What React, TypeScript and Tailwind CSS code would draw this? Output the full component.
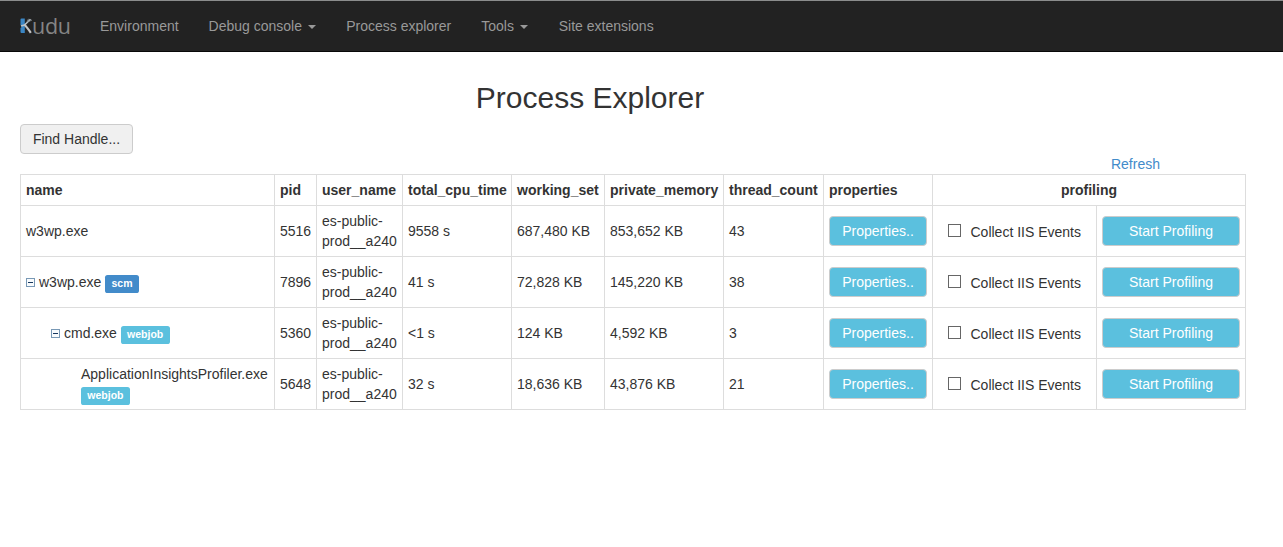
import React from "react";

type Tag = "scm" | "webjob";

interface ProcessRow {
  name: string;
  tag?: Tag;
  depth: 0 | 1 | 2;
  expandable: boolean;
  pid: number;
  cpu: string;
  workingSet: string;
  privateMemory: string;
  threads: number;
}

const rows: ProcessRow[] = [
  { name: "w3wp.exe", depth: 0, expandable: false, pid: 5516, cpu: "9558 s", workingSet: "687,480 KB", privateMemory: "853,652 KB", threads: 43 },
  { name: "w3wp.exe", tag: "scm", depth: 0, expandable: true, pid: 7896, cpu: "41 s", workingSet: "72,828 KB", privateMemory: "145,220 KB", threads: 38 },
  { name: "cmd.exe", tag: "webjob", depth: 1, expandable: true, pid: 5360, cpu: "<1 s", workingSet: "124 KB", privateMemory: "4,592 KB", threads: 3 },
  { name: "ApplicationInsightsProfiler.exe", tag: "webjob", depth: 2, expandable: false, pid: 5648, cpu: "32 s", workingSet: "18,636 KB", privateMemory: "43,876 KB", threads: 21 },
];

const indents = { 0: "pl-[5px]", 1: "pl-[30px]", 2: "pl-[60px]" };
const tagColors = { scm: "bg-[#428bca]", webjob: "bg-[#5bc0de]" };

function KuduLogo() {
  return (
    <a className="flex w-[50px] items-center pb-px text-[#858585]">
      <svg width="13" height="16" viewBox="0 0 13 16" className="shrink-0">
        <path d="M1.5 0.5H4.8V15H1.5Q0.5 15 0.5 14V10L2 8.5L0.5 7V1.5Q0.5 .5 1.5 .5Z" fill="#3b86c4" />
        <path d="M1 8L4.5 7L10.5 1.2" stroke="#b9c4cb" strokeWidth="1.5" fill="none" />
        <path d="M6.8 4.5L8.5 .8M8.3 3.7L12 2" stroke="#858b90" strokeWidth=".9" fill="none" />
        <path d="M4.2 6.5Q7 9 10.8 14.8" stroke="#c4c4c4" strokeWidth="2.2" fill="none" />
      </svg>
      <span className="-ml-px font-['Open_Sans',sans-serif] text-[21.5px] leading-[20px] font-normal tracking-[-0.3px]">udu</span>
    </a>
  );
}

function Caret() {
  return <span className="ml-[6.2px] inline-block border-x-4 border-t-4 border-x-transparent border-t-[#999] align-middle" />;
}

function Collapse() {
  return (
    <svg width="9" height="9" viewBox="0 0 9 9" className="mr-1 inline-block align-baseline">
      <rect x=".5" y=".5" width="8" height="8" fill="#f8fbfd" stroke="#7898b5" />
      <path d="M2 4.5H7" stroke="#17375e" />
    </svg>
  );
}

function Th({ children, className = "", colSpan }: { children: React.ReactNode; className?: string; colSpan?: number }) {
  return (
    <th colSpan={colSpan} className={`border-r border-b border-[#ddd] px-[5px] py-0 font-bold ${className}`}>
      {children}
    </th>
  );
}

function Td({ children, className = "px-[5px]" }: { children: React.ReactNode; className?: string }) {
  return <td className={`border-r border-b border-[#ddd] py-0 align-middle ${className}`}>{children}</td>;
}

function InfoButton({ children }: { children: React.ReactNode }) {
  return (
    <button className="block h-[30px] w-full rounded-[4px] border border-[#ccc] bg-[#5bc0de] text-center leading-[20px] whitespace-nowrap text-white">
      {children}
    </button>
  );
}

export default function App() {
  return (
    <div className="min-h-[547px] bg-white font-['Liberation_Sans',Arial,sans-serif] text-[14px] leading-[20px] text-[#333]">
      <nav className="flex h-[52px] items-center border-t border-b border-t-[#8b8d8d] border-b-[#080808] bg-[#222] pl-5 text-[#999]">
        <KuduLogo />
        <ul className="ml-[30px] flex gap-[30px] whitespace-nowrap">
          <li>Environment</li>
          <li>Debug console<Caret /></li>
          <li>Process explorer</li>
          <li>Tools<Caret /></li>
          <li className="pl-[0.6px]">Site extensions</li>
        </ul>
      </nav>
      <main className="ml-5 w-[1226px] pt-[29px]">
        <h1 className="w-[1140px] text-center text-[30px] leading-[34px] font-normal">Process Explorer</h1>
        <button className="mt-[9px] block h-[30px] w-[113px] rounded-[4px] border border-[#ccc] bg-[#f0f0f0]">Find Handle...</button>
        <div className="w-[1140px] text-right text-[#428bca]"><a>Refresh</a></div>
        <table className="w-[1226px] table-fixed border-separate border-spacing-0 border-t border-l border-[#ddd] text-left">
          <colgroup>
            <col className="w-[254px]" />
            <col className="w-[42px]" />
            <col className="w-[86px]" />
            <col className="w-[109px]" />
            <col className="w-[93px]" />
            <col className="w-[119px]" />
            <col className="w-[100px]" />
            <col className="w-[109px]" />
            <col className="w-[164px]" />
            <col className="w-[149px]" />
          </colgroup>
          <thead>
            <tr className="h-[31px]">
              <Th>name</Th>
              <Th>pid</Th>
              <Th>user_name</Th>
              <Th>total_cpu_time</Th>
              <Th>working_set</Th>
              <Th>private_memory</Th>
              <Th>thread_count</Th>
              <Th>properties</Th>
              <Th colSpan={2} className="text-center">profiling</Th>
            </tr>
          </thead>
          <tbody>
            {rows.map((row) => (
              <tr key={row.pid} className="h-[51px]">
                <Td className={`pr-0 ${indents[row.depth]}`}>
                  {row.expandable && <Collapse />}
                  {row.name}{" "}
                  {row.tag && (
                    <span className={`inline-block h-[18px] rounded-[2.6px] px-[6.3px] align-baseline text-[10.5px] leading-[17px] font-bold text-white ${tagColors[row.tag]}`}>
                      {row.tag}
                    </span>
                  )}
                </Td>
                <Td>{row.pid}</Td>
                <Td className="pl-[5px]">es-public-<br />prod__a240</Td>
                <Td>{row.cpu}</Td>
                <Td>{row.workingSet}</Td>
                <Td>{row.privateMemory}</Td>
                <Td>{row.threads}</Td>
                <Td><InfoButton>Properties..</InfoButton></Td>
                <Td>
                  <label className="flex items-center pl-[10px] whitespace-nowrap">
                    <input type="checkbox" className="mr-[9.5px] mb-[2px] h-[13px] w-[13px] shrink-0 appearance-none border border-[#666] bg-white" />
                    <span className="relative top-px">Collect IIS Events</span>
                  </label>
                </Td>
                <Td><InfoButton>Start Profiling</InfoButton></Td>
              </tr>
            ))}
          </tbody>
        </table>
      </main>
    </div>
  );
}
